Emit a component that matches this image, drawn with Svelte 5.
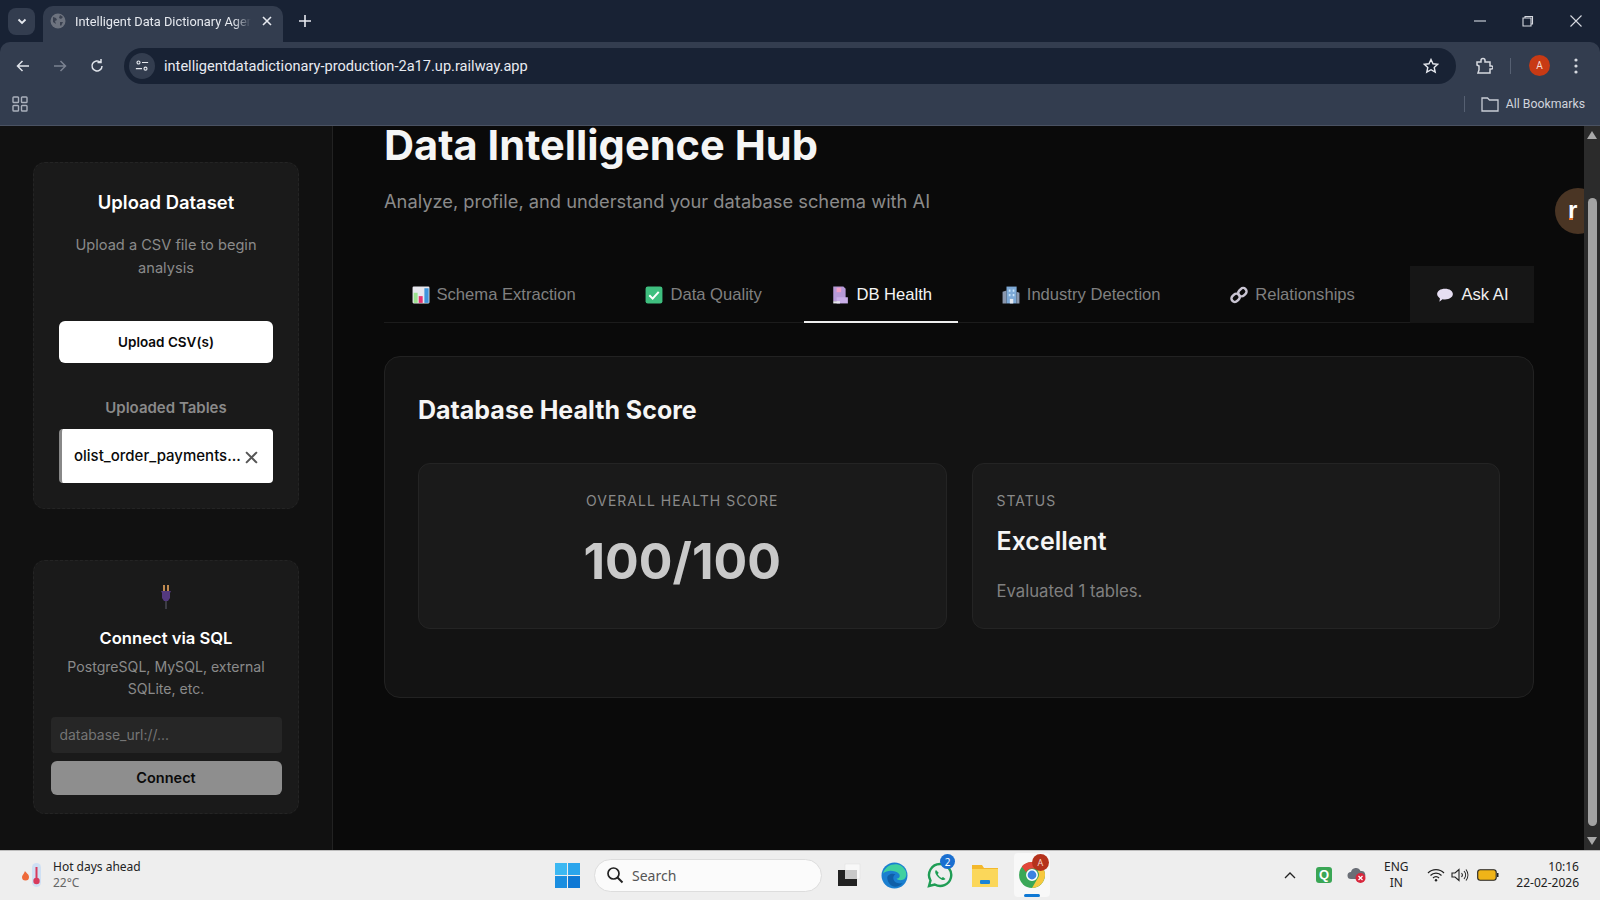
<script>
	const tabs = [
		{ id: 'schema', label: 'Schema Extraction' },
		{ id: 'quality', label: 'Data Quality' },
		{ id: 'health', label: 'DB Health', active: true },
		{ id: 'industry', label: 'Industry Detection' },
		{ id: 'rel', label: 'Relationships' },
		{ id: 'ask', label: 'Ask AI', ask: true }
	]
</script>

{#snippet tabIcon(id)}
	<svg class="tab-icon" viewBox="0 0 16 16" width="18" height="18">
		{#if id === 'schema'}
			<rect x="0.5" y="0.5" width="15" height="15" rx="1" fill="#e8e8ee" />
			<rect x="1.5" y="6" width="3.5" height="9" fill="#9be38e" />
			<rect x="6" y="9" width="3.5" height="6" fill="#e8316f" />
			<rect x="11" y="2" width="3.8" height="13" fill="#3f95dc" />
		{:else if id === 'quality'}
			<rect x="0.5" y="0.5" width="15" height="15" rx="2" fill="#3fbf7f" />
			<path d="M3.8 8.2l3 3 5.4-6" fill="none" stroke="#fff" stroke-width="1.8" />
		{:else if id === 'health'}
			<path d="M2 .5h9l2 2v11H2z" fill="#b79ad8" />
			<rect x="5" y="1.500" width="4" height="4" fill="#f0a0c8" />
			<rect x="5" y="10" width="10" height="5.500" fill="#c9aee8" />
			<rect x="2" y="13.500" width="6" height="2" fill="#e6e6ee" />
		{:else if id === 'industry'}
			<path d="M.5 15.500V5l3.500-1v11.500z" fill="#8a97ad" />
			<rect x="4" y=".5" width="9" height="15" fill="#7da9d6" />
			<path d="M13 5l2.500 1v9.500H13z" fill="#8a97ad" />
			<path d="M6 3h1.500v2H6zM9.500 3H11v2H9.500zM6 7h1.500v2H6zM9.500 7H11v2H9.500z" fill="#c9e4fa" />
			<rect x="7" y="11.500" width="3" height="4" fill="#e4e8f0" />
		{:else if id === 'rel'}
			<g fill="none" stroke="#c9c4d2" stroke-width="2.200">
				<rect x="8" y="1.500" width="6" height="8" rx="3" transform="rotate(45 11 5.500)" />
				<rect x="2" y="6.500" width="6" height="8" rx="3" transform="rotate(45 5 10.500)" />
			</g>
		{:else}
			<path d="M8 2.500c4 0 7 2 7 4.700S12 12 8 12c-.8 0-1.500-.1-2.200-.2L3 14l.5-3C2 10 1 8.700 1 7.200 1 4.500 4 2.500 8 2.500z" fill="#e6def2" />
		{/if}
	</svg>
{/snippet}

<div class="screen">
	<header class="chrome">
		<div class="tabstrip">
			<button class="tab-search" aria-label="Search tabs">
				<svg viewBox="0 0 12 12" width="12" height="12"><path d="M2.500 4.500L6 8l3.500-3.500" fill="none" stroke="#e6e9ef" stroke-width="1.800" /></svg>
			</button>
			<div class="browser-tab">
				<svg viewBox="0 0 16 16" width="16" height="16">
					<circle cx="8" cy="8" r="7.500" fill="#6d737f" />
					<path d="M3 4l3 1 1 2-2 1 1 3-3-2zM10 2l3 2-2 2-2-1zM10 9l3 0-2 4-1-1z" fill="#3a4150" />
				</svg>
				<span class="tab-title">Intelligent Data Dictionary Agen</span>
				<svg class="tab-close" viewBox="0 0 12 12" width="12" height="12"><path d="M2 2l8 8M10 2l-8 8" stroke="#e6e9ef" stroke-width="1.600" /></svg>
			</div>
			<svg class="new-tab" viewBox="0 0 14 14" width="14" height="14"><path d="M7 1v12M1 7h12" stroke="#e6e9ef" stroke-width="1.600" /></svg>
			<div class="win-controls">
				<svg viewBox="0 0 12 12" width="12" height="12"><path d="M0 6h12" stroke="#b8bec9" stroke-width="1.300" /></svg>
				<svg viewBox="0 0 12 12" width="12" height="12"><path d="M3 3V1.500h7.500V9H9M1 3h8v8H1z" fill="none" stroke="#d6d9e0" stroke-width="1.100" /></svg>
				<svg viewBox="0 0 12 12" width="12" height="12"><path d="M.5.5l11 11M11.500.5l-11 11" stroke="#d6d9e0" stroke-width="1.100" /></svg>
			</div>
		</div>
		<div class="toolbar">
			<svg class="nav" viewBox="0 0 16 16" width="16" height="16"><path d="M14 8H3M7.500 3L2.500 8l5 5" fill="none" stroke="#dfe3ea" stroke-width="1.500" /></svg>
			<svg class="nav" viewBox="0 0 16 16" width="16" height="16"><path d="M2 8h11M8.500 3l5 5-5 5" fill="none" stroke="#7b8291" stroke-width="1.500" /></svg>
			<svg class="nav" viewBox="0 0 16 16" width="16" height="16"><path d="M13 8a5 5 0 1 1-1.500-3.600M12 1v3.500H8.500" fill="none" stroke="#dfe3ea" stroke-width="1.500" /></svg>
			<div class="omnibox">
				<span class="site-btn">
					<svg viewBox="0 0 16 16" width="14" height="14"><circle cx="4" cy="4" r="1.700" fill="none" stroke="#e6e9ef" stroke-width="1.300" /><path d="M8 4h7M1 11h7" stroke="#e6e9ef" stroke-width="1.300" /><circle cx="12" cy="11" r="1.700" fill="none" stroke="#e6e9ef" stroke-width="1.300" /></svg>
				</span>
				<span class="url">intelligentdatadictionary-production-2a17.up.railway.app</span>
				<svg class="star" viewBox="0 0 16 16" width="16" height="16"><path d="M8 1.500l2 4.300 4.700.5-3.500 3.200 1 4.600L8 11.700l-4.200 2.400 1-4.600L1.300 6.300 6 5.800z" fill="none" stroke="#e6e9ef" stroke-width="1.400" /></svg>
			</div>
			<svg class="ext" viewBox="0 0 18 18" width="18" height="18"><path d="M2 5h4V3.500a2 2 0 0 1 4 0V5h5v4h1.500a1.500 1.500 0 0 1 0 3H15v4H3l1-3V9L2 8z" fill="none" stroke="#d6d9e0" stroke-width="1.500" /></svg>
			<span class="tool-sep"></span>
			<span class="avatar">A</span>
			<svg class="menu" viewBox="0 0 4 16" width="4" height="16"><circle cx="2" cy="2" r="1.600" fill="#d6d9e0" /><circle cx="2" cy="8" r="1.600" fill="#d6d9e0" /><circle cx="2" cy="14" r="1.600" fill="#d6d9e0" /></svg>
		</div>
		<div class="bookmarks">
			<svg viewBox="0 0 16 16" width="16" height="16"><g fill="none" stroke="#aab0bc" stroke-width="1.400"><rect x="1" y="1" width="5.500" height="5.500" rx=".8" /><rect x="9.500" y="1" width="5.500" height="5.500" rx=".8" /><rect x="1" y="9.500" width="5.500" height="5.500" rx=".8" /><rect x="9.500" y="9.500" width="5.500" height="5.500" rx=".8" /></g></svg>
			<span class="bm-sep"></span>
			<svg viewBox="0 0 18 16" width="18" height="16"><path d="M1 2h5.500l2 2H17v11H1z" fill="none" stroke="#c9cdd6" stroke-width="1.300" /></svg>
			<span class="bm-label">All Bookmarks</span>
		</div>
	</header>

	<div class="page">
		<aside class="sidebar">
			<section class="side-card upload">
				<h3>Upload Dataset</h3>
				<p class="hint">Upload a CSV file to begin analysis</p>
				<button class="btn-upload">Upload CSV(s)</button>
				<h4>Uploaded Tables</h4>
				<div class="table-row">
					<span class="table-name">olist_order_payments...</span>
					<svg class="row-x" viewBox="0 0 12 12" width="13" height="13"><path d="M1 1l10 10M11 1L1 11" stroke="#555" stroke-width="1.800" /></svg>
				</div>
			</section>
			<section class="side-card connect">
				<svg class="plug" viewBox="0 0 12 26" width="12" height="26">
					<rect x="3" y="1" width="2" height="6" fill="#c08a50" />
					<rect x="7" y="1" width="2" height="6" fill="#c08a50" />
					<path d="M1 7h10l-1 2v5l-2 3H4l-2-3V9z" fill="#54397f" />
					<rect x="5" y="17" width="2" height="8" fill="#3c3c44" />
				</svg>
				<h3>Connect via SQL</h3>
				<p class="hint small">PostgreSQL, MySQL, external SQLite, etc.</p>
				<input class="db-input" placeholder="database_url://..." />
				<button class="btn-connect">Connect</button>
			</section>
		</aside>

		<main class="content">
			<h1>Data Intelligence Hub</h1>
			<p class="sub">Analyze, profile, and understand your database schema with AI</p>
			<nav class="tabs">
				{#each tabs as t (t.id)}
					<div class="tab" class:active={t.active} class:ask={t.ask}>
						{@render tabIcon(t.id)}
						<span>{t.label}</span>
					</div>
				{/each}
			</nav>
			<section class="panel">
				<h2>Database Health Score</h2>
				<div class="stats">
					<div class="stat center">
						<div class="stat-label">OVERALL HEALTH SCORE</div>
						<div class="score">100/100</div>
					</div>
					<div class="stat">
						<div class="stat-label">STATUS</div>
						<div class="status">Excellent</div>
						<div class="evaluated">Evaluated 1 tables.</div>
					</div>
				</div>
			</section>
		</main>

		<div class="float-badge"><span>r</span></div>
		<div class="scrollbar">
			<svg viewBox="0 0 10 8" width="10" height="8"><path d="M5 0l5 8H0z" fill="#a8a8a8" /></svg>
			<div class="thumb"></div>
			<svg viewBox="0 0 10 8" width="10" height="8"><path d="M0 0h10L5 8z" fill="#a8a8a8" /></svg>
		</div>
	</div>

	<footer class="taskbar">
		<div class="weather">
			<svg viewBox="0 0 22 26" width="22" height="26">
				<path d="M4 9c1 2 4 3 4 6a3.500 3.500 0 0 1-7 0c0-2 2-3 3-6z" fill="#ee6a3a" />
				<rect x="11" y="1" width="9" height="24" rx="4.500" fill="#cfe0f4" />
				<rect x="14.500" y="5" width="2" height="13" fill="#d83a5c" />
				<circle cx="15.500" cy="19" r="3.200" fill="#d83a5c" />
			</svg>
			<div>
				<div class="w-title">Hot days ahead</div>
				<div class="w-temp">22°C</div>
			</div>
		</div>
		<div class="task-center">
			<svg viewBox="0 0 24 24" width="25" height="25">
				<rect x="0" y="0" width="11.500" height="11.500" fill="#3cb8f2" />
				<rect x="12.500" y="0" width="11.500" height="11.500" fill="#2ba5ec" />
				<rect x="0" y="12.500" width="11.500" height="11.500" fill="#1a8ee0" />
				<rect x="12.500" y="12.500" width="11.500" height="11.500" fill="#0f78d4" />
			</svg>
			<div class="search">
				<svg viewBox="0 0 18 18" width="18" height="18"><circle cx="7.500" cy="7.500" r="5.500" fill="none" stroke="#222" stroke-width="1.700" /><path d="M11.500 11.500l5 5" stroke="#222" stroke-width="1.900" /></svg>
				<span>Search</span>
			</div>
			<svg class="app first" viewBox="0 0 26 26" width="26" height="26">
				<rect x="9" y="2" width="15" height="15" fill="#f8f8f8" stroke="#ddd" stroke-width=".5" />
				<rect x="2" y="8" width="19" height="16" fill="#222" />
				<rect x="9" y="8" width="12" height="9" fill="#c8c8c8" />
			</svg>
			<svg class="app" viewBox="0 0 26 26" width="27" height="27">
				<circle cx="13" cy="13" r="12.500" fill="#1a7fd0" />
				<path d="M2 11C4 3 14 0 20 4c4 3 6 8 3 12-2 2-7 2-8 0 3 0 4-3 2-5-3-3-11-4-15 0z" fill="#3fd0a0" />
				<path d="M6 15c0-3 5-5 8-3-3 1-3 6 1 8 3 1 5 1 6 0-3 4-9 5-12 2-2-2-3-5-3-7z" fill="#0f5fa8" />
			</svg>
			<div class="wa">
				<svg viewBox="0 0 26 26" width="26" height="26">
					<path d="M13 2a11 11 0 0 0-9.500 16.500L2 24l5.700-1.500A11 11 0 1 0 13 2z" fill="none" stroke="#1f9d55" stroke-width="2.400" />
					<path d="M9 8c-2 2 0 5 2.500 7.500S17 19 18.500 17l-2.500-2-1.500 1c-1.500-.8-3-2.300-3.800-3.800l1-1.500z" fill="#1f9d55" />
				</svg>
				<span class="wa-badge">2</span>
			</div>
			<svg class="app" viewBox="0 0 26 24" width="26" height="24">
				<path d="M0 2h10l2 3h14v19H0z" fill="#f3b82c" />
				<rect x="0" y="6" width="26" height="18" fill="#fbd75a" />
				<rect x="8" y="17" width="10" height="4" rx="1" fill="#1a84d8" />
			</svg>
			<div class="chrome-app">
				<svg viewBox="0 0 26 26" width="28" height="28">
					<circle cx="13" cy="13" r="12" fill="#3aa757" />
					<path d="M13 1a12 12 0 0 1 10.400 6H13a6 6 0 0 0-5.500 3.500L3.500 5.200A12 12 0 0 1 13 1z" fill="#e2463a" />
					<path d="M23.400 7A12 12 0 0 1 13 25l5-8.500A6 6 0 0 0 18 9z" fill="#f7c93e" />
					<circle cx="13" cy="13" r="4.800" fill="#3b82e0" stroke="#fff" stroke-width="1.400" />
				</svg>
				<span class="chrome-badge">A</span>
				<span class="running"></span>
			</div>
		</div>
		<div class="tray">
			<svg viewBox="0 0 12 8" width="12" height="8"><path d="M1 7l5-5 5 5" fill="none" stroke="#222" stroke-width="1.300" /></svg>
			<span class="q-icon">Q</span>
			<svg viewBox="0 0 20 18" width="20" height="18">
				<path d="M4 13a3.500 3.500 0 0 1 0-7 5 5 0 0 1 9.500-1A4 4 0 0 1 15 13z" fill="#6a6e76" />
				<circle cx="13.500" cy="12" r="5" fill="#d8263c" />
				<path d="M11.500 10l4 4M15.500 10l-4 4" stroke="#fff" stroke-width="1.200" />
			</svg>
			<div class="lang"><span>ENG</span><span>IN</span></div>
			<svg viewBox="0 0 18 14" width="18" height="14"><g fill="none" stroke="#222" stroke-width="1.200"><path d="M1 5a11 11 0 0 1 16 0M3.500 7.500a7.500 7.500 0 0 1 11 0M6 10a4 4 0 0 1 6 0" /></g><circle cx="9" cy="12.300" r="1.200" fill="#222" /></svg>
			<svg class="vol" viewBox="0 0 18 14" width="18" height="14"><g fill="none" stroke="#222" stroke-width="1.100"><path d="M1 5h3l4-3.500v11L4 9H1zM10.500 5a3 3 0 0 1 0 4M13 3a6 6 0 0 1 0 8M15 1.500a9 9 0 0 1 0 11" /></g></svg>
			<svg class="batt" viewBox="0 0 22 12" width="22" height="12"><rect x=".7" y=".7" width="18.500" height="10.500" rx="2.500" fill="#f0b418" stroke="#222" stroke-width="1.100" /><rect x="20" y="4" width="1.500" height="4" fill="#222" /></svg>
			<div class="clock"><span>10:16</span><span>22-02-2026</span></div>
		</div>
	</footer>
</div>

<style>
	:global(body) {
		margin: 0;
		background: #0a0a0a;
	}

	.screen {
		width: 1600px;
		height: 900px;
		display: flex;
		flex-direction: column;
		overflow: hidden;
		font-family: Inter, "Liberation Sans", sans-serif;
	}

	/* browser frame */
	.chrome {
		flex: none;
		background: #182234;
		font-family: Roboto, "Noto Sans", sans-serif;
		color: #e6e9ef;
	}

	.tabstrip {
		height: 42px;
		display: flex;
		align-items: center;
		padding-left: 8px;
		position: relative;
	}

	.tab-search {
		width: 27px;
		height: 27px;
		border: 0;
		border-radius: 8px;
		background: #333d4f;
		display: flex;
		align-items: center;
		justify-content: center;
		padding: 0;
		margin-right: 8px;
	}

	.browser-tab {
		width: 240px;
		height: 36px;
		margin-top: 6px;
		padding: 0 10px 6px 7px;
		box-sizing: border-box;
		background: #333d4f;
		border-radius: 10px 10px 0 0;
		display: flex;
		align-items: center;
		gap: 9px;
	}

	.tab-title {
		font-size: 12.800px;
		width: 176px;
		white-space: nowrap;
		overflow: hidden;
		-webkit-mask-image: linear-gradient(90deg, #000 90%, transparent);
		mask-image: linear-gradient(90deg, #000 90%, transparent);
	}

	.tab-close {
		margin-left: 1px;
	}

	.new-tab {
		margin-left: 15px;
	}

	.win-controls {
		margin-left: auto;
		display: flex;
		gap: 36px;
		padding-right: 18px;
		align-items: center;
	}

	.toolbar {
		height: 47px;
		background: #333d4f;
		border-radius: 10px 10px 0 0;
		display: flex;
		align-items: center;
		padding-left: 15px;
		box-sizing: border-box;
	}

	.nav {
		margin-right: 21px;
	}

	.omnibox {
		width: 1332px;
		height: 36px;
		margin-left: -2px;
		background: #182234;
		border-radius: 18px;
		display: flex;
		align-items: center;
		padding: 0 17px 0 5px;
		box-sizing: border-box;
	}

	.site-btn {
		width: 26px;
		height: 26px;
		border-radius: 50%;
		background: #333d4f;
		display: flex;
		align-items: center;
		justify-content: center;
		margin-right: 9px;
	}

	.url {
		font-size: 14.600px;
		color: #e8ebf1;
	}

	.star {
		margin-left: auto;
	}

	.ext {
		margin-left: 19px;
	}

	.tool-sep {
		width: 1px;
		height: 16px;
		background: #566072;
		margin-left: 17px;
	}

	.avatar {
		width: 21px;
		height: 21px;
		margin-left: 18px;
		border-radius: 50%;
		background: #c83a14;
		font-size: 10px;
		color: #f4ddd6;
		display: flex;
		align-items: center;
		justify-content: center;
	}

	.menu {
		margin-left: 24px;
	}

	.bookmarks {
		height: 29px;
		background: #333d4f;
		border-bottom: 1px solid #4a5262;
		display: flex;
		align-items: center;
		padding: 0 15px 7px 12px;
	}

	.bm-sep {
		width: 1px;
		height: 16px;
		background: #566072;
		margin-left: auto;
		margin-right: 16px;
	}

	.bm-label {
		font-size: 12.300px;
		color: #d0d4dc;
		margin-left: 7px;
	}

	/* page */
	.page {
		flex: 1;
		min-height: 0;
		display: flex;
		position: relative;
		background: #0a0a0a;
	}

	.sidebar {
		width: 333px;
		flex: none;
		box-sizing: border-box;
		background: #111;
		border-right: 1px solid #222;
		padding: 36px 33px 0;
		display: flex;
		flex-direction: column;
		gap: 51px;
	}

	.side-card {
		background: #1a1a1a;
		border: 1px dashed #242424;
		border-radius: 12px;
		box-sizing: border-box;
		text-align: center;
	}

	.upload {
		height: 347px;
		padding: 27px 25px 0;
	}

	.side-card h3 {
		margin: 0;
		color: #fff;
		font-size: 18.400px;
		font-weight: 600;
		line-height: 24px;
	}

	.side-card.connect h3 {
		font-size: 16.600px;
	}

	.hint {
		margin: 20px 0 0;
		color: #8a8a8a;
		font-size: 14.600px;
		line-height: 23px;
	}

	.btn-upload {
		width: 100%;
		height: 42px;
		margin-top: 41px;
		border: 0;
		border-radius: 6px;
		background: #fff;
		color: #0a0a0a;
		font: 600 13.500px Inter, sans-serif;
	}

	.upload h4 {
		margin: 35px 0 0;
		color: #8a8a8a;
		font-size: 15px;
		font-weight: 600;
		line-height: 20px;
	}

	.table-row {
		height: 54px;
		margin-top: 11px;
		padding: 0 15px 2px 12px;
		background: #fff;
		border-left: 3px solid #888;
		border-radius: 4px;
		display: flex;
		align-items: center;
		justify-content: space-between;
		box-sizing: border-box;
	}

	.table-name {
		font-size: 15px;
		font-weight: 500;
		color: #0a0a0a;
	}

	.row-x {
		margin-top: 4px;
	}

	.connect {
		height: 254px;
		padding: 23px 16.500px 0;
		display: flex;
		flex-direction: column;
		align-items: stretch;
	}

	.plug {
		align-self: center;
		margin-bottom: 16px;
	}

	.hint.small {
		margin-top: 6px;
		font-size: 14.100px;
		line-height: 22px;
	}

	.db-input {
		height: 36px;
		margin-top: 17px;
		padding: 0 9px;
		background: #262626;
		border: 0;
		border-radius: 4px;
		font: 13.900px Inter, sans-serif;
		color: #ddd;
	}

	.db-input::placeholder {
		color: #757575;
	}

	.btn-connect {
		height: 34px;
		margin-top: 8px;
		padding-bottom: 3px;
		border: 0;
		border-radius: 6px;
		background: #8e8e8e;
		color: #0a0a0a;
		font: 600 14.500px Inter, sans-serif;
	}

	.content {
		flex: 1;
		padding: 0 66px 0 51px;
		min-width: 0;
	}

	h1 {
		margin: 0;
		height: 38px;
		line-height: 38px;
		color: #f5f5f5;
		font-size: 41.600px;
		font-weight: 700;
	}

	.sub {
		margin: 23px 0 0;
		color: #8a8a8a;
		font-size: 18.300px;
		line-height: 28px;
	}

	.tabs {
		display: flex;
		margin-top: 51px;
		height: 56px;
		border-bottom: 1px solid #1c1c1c;
		gap: 16.700px;
	}

	.tab {
		display: flex;
		align-items: center;
		gap: 7px;
		padding: 0 25.500px 0 27.500px;
		color: #808080;
		margin-bottom: -1px;
		font-family: "Liberation Sans", Inter, sans-serif;
		font-size: 16.600px;
	}

	.tab.active {
		color: #f5f5f5;
		border-bottom: 2px solid #eee;
		padding-top: 2px;
	}

	.tab.ask {
		margin-left: auto;
		padding-left: 26.500px;
		background: #161616;
		color: #f0f0f0;
	}

	.panel {
		margin-top: 33px;
		height: 342px;
		box-sizing: border-box;
		background: #131313;
		border: 1px solid #222;
		border-radius: 16px;
		padding: 36px 33px;
	}

	h2 {
		margin: 0;
		color: #f5f5f5;
		font-size: 25px;
		font-weight: 700;
		line-height: 34px;
	}

	.stats {
		display: grid;
		grid-template-columns: 1fr 1fr;
		gap: 25px;
		margin-top: 36px;
	}

	.stat {
		height: 166px;
		box-sizing: border-box;
		background: #1a1a1a;
		border: 1px solid #242424;
		border-radius: 12px;
		padding: 28px 24px 0;
	}

	.stat.center {
		text-align: center;
	}

	.stat-label {
		color: #8a8a8a;
		font-size: 14px;
		letter-spacing: 1px;
		line-height: 18px;
	}

	.score {
		margin-top: 20px;
		color: #c9c9c9;
		font-size: 50px;
		font-weight: 700;
		line-height: 62px;
	}

	.status {
		margin-top: 15px;
		color: #f5f5f5;
		font-size: 25px;
		font-weight: 600;
		line-height: 32px;
	}

	.evaluated {
		margin-top: 22px;
		color: #808080;
		font-size: 16.700px;
		line-height: 24px;
	}

	.float-badge {
		position: absolute;
		left: 1555px;
		top: 62px;
		width: 46px;
		height: 46px;
		border-radius: 50%;
		background: #4a3524;
		display: flex;
		align-items: center;
		padding-left: 13px;
		box-sizing: border-box;
	}

	.float-badge span {
		color: #fff;
		font: 700 24px/20px "Liberation Sans", sans-serif;
		border-bottom: 2px solid transparent;
		position: relative;
	}

	.float-badge span::after {
		content: "";
		position: absolute;
		left: 1px;
		bottom: 0;
		width: 4px;
		height: 2px;
		background: #e8762a;
	}

	.scrollbar {
		position: absolute;
		right: 0;
		top: 0;
		bottom: 0;
		width: 16px;
		background: #2b2b2b;
		display: flex;
		flex-direction: column;
		align-items: center;
		padding: 5px 0;
		box-sizing: border-box;
	}

	.thumb {
		width: 9px;
		height: 628px;
		margin-top: 59px;
		margin-bottom: auto;
		border-radius: 5px;
		background: #a3a3a3;
	}

	/* windows taskbar */
	.taskbar {
		flex: none;
		height: 50px;
		box-sizing: border-box;
		background: #eeeeee;
		border-top: 1px solid #bdbdbd;
		display: flex;
		align-items: center;
		position: relative;
		font-family: "Noto Sans", "Open Sans", sans-serif;
		color: #222;
	}

	.weather {
		display: flex;
		align-items: center;
		gap: 10px;
		padding-left: 21px;
		margin-top: -2px;
	}

	.w-title {
		font-size: 12px;
		line-height: 16px;
	}

	.w-temp {
		font-size: 12px;
		line-height: 16px;
		color: #666;
	}

	.task-center {
		position: absolute;
		left: 555px;
		top: 0;
		height: 48px;
		display: flex;
		align-items: center;
	}

	.search {
		width: 228px;
		height: 33px;
		margin-left: 14px;
		border-radius: 17px;
		background: #fbfbfb;
		border: 1px solid #ddd;
		box-sizing: border-box;
		display: flex;
		align-items: center;
		gap: 8px;
		padding-left: 11px;
		font-size: 14px;
		color: #555;
	}

	.app {
		margin-left: 19px;
	}

	.app.first {
		margin-left: 14px;
	}

	.wa {
		position: relative;
		margin-left: 19px;
		display: flex;
	}

	.wa-badge {
		position: absolute;
		right: -2px;
		top: -8px;
		width: 15px;
		height: 15px;
		border-radius: 50%;
		background: #1a6fd0;
		color: #fff;
		font-size: 10px;
		display: flex;
		align-items: center;
		justify-content: center;
	}

	.chrome-app {
		position: relative;
		width: 36px;
		height: 44px;
		margin-left: 16px;
		background: #f8f8f8;
		border-radius: 4px;
		display: flex;
		align-items: center;
		justify-content: center;
	}

	.chrome-badge {
		position: absolute;
		right: 1px;
		top: 1px;
		width: 17px;
		height: 17px;
		border-radius: 50%;
		background: #b5321c;
		color: #f5d5cc;
		font-size: 9px;
		display: flex;
		align-items: center;
		justify-content: center;
	}

	.running {
		position: absolute;
		left: 10px;
		bottom: 0;
		width: 16px;
		height: 3px;
		border-radius: 2px;
		background: #0f78d4;
	}

	.tray {
		position: absolute;
		left: 1284px;
		right: 21px;
		top: 0;
		height: 48px;
		display: flex;
		align-items: center;
		gap: 15px;
	}

	.q-icon {
		width: 16px;
		height: 16px;
		margin-left: 5px;
		border-radius: 3px;
		background: #3aa655;
		color: #fff;
		font: 700 13px/16px "Liberation Sans", sans-serif;
		text-align: center;
	}

	.lang {
		display: flex;
		flex-direction: column;
		align-items: center;
		font-size: 12px;
		line-height: 16px;
		margin: 0 3px 0 2px;
	}

	.vol {
		margin-left: -9px;
	}

	.batt {
		margin-left: -7px;
	}

	.clock {
		display: flex;
		flex-direction: column;
		align-items: flex-end;
		font-size: 12px;
		line-height: 16px;
		margin-left: auto;
		white-space: nowrap;
	}
</style>
